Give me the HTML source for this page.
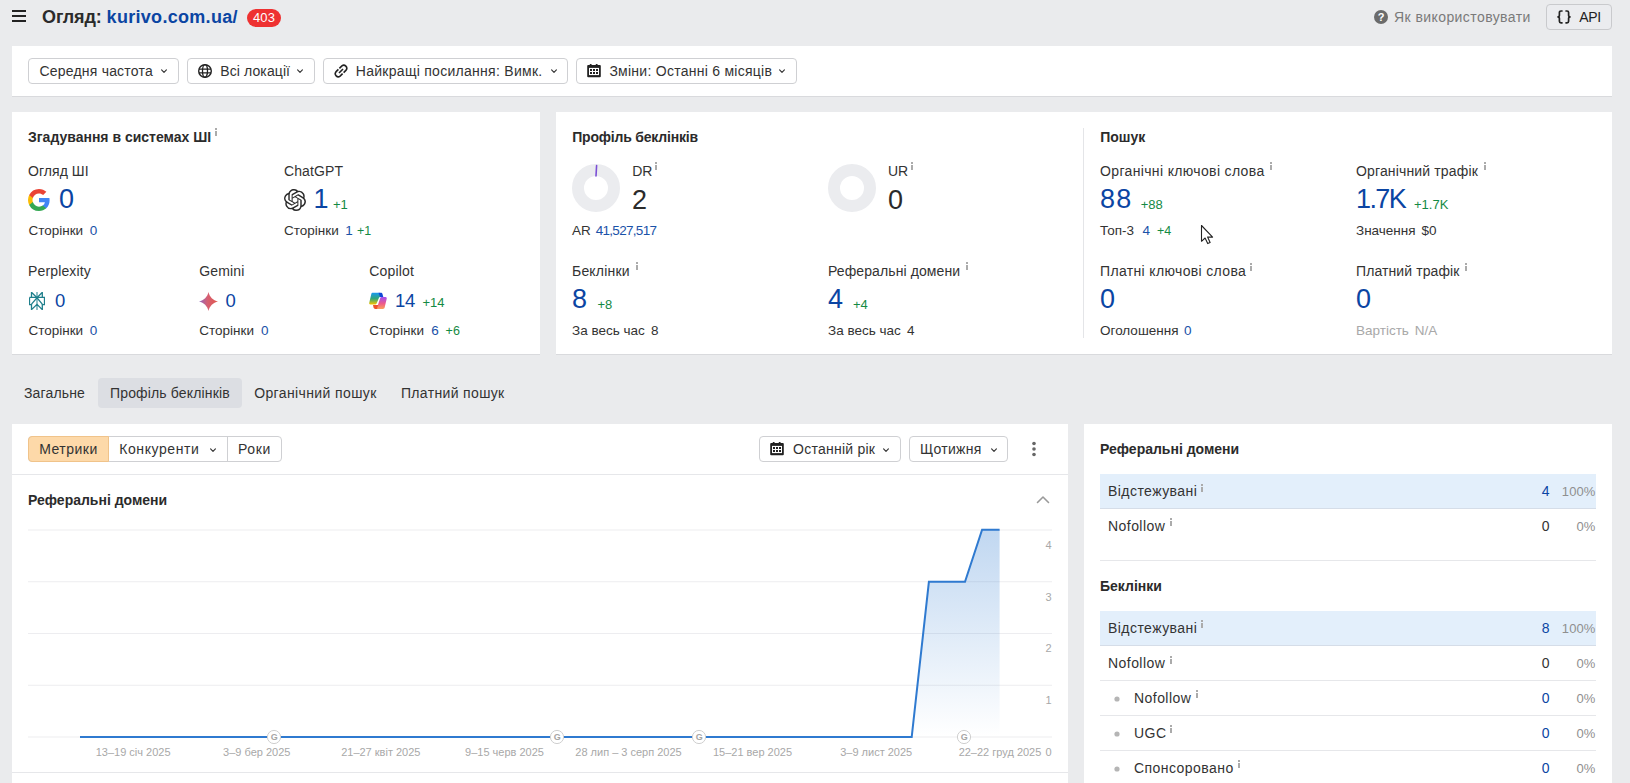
<!DOCTYPE html>
<html><head><meta charset="utf-8"><style>
html,body{margin:0;padding:0}
body{width:1630px;height:783px;overflow:hidden;position:relative;background:#eaebed;font-family:"Liberation Sans",sans-serif}
.t{position:absolute;white-space:nowrap;font-family:"Liberation Sans",sans-serif}
.r{position:absolute;display:block}
</style></head><body>
<div class="r" style="left:12px;top:10px;width:14px;height:2px;background:#222;"></div>
<div class="r" style="left:12px;top:15px;width:14px;height:2px;background:#222;"></div>
<div class="r" style="left:12px;top:20px;width:14px;height:2px;background:#222;"></div>
<span class="t" style="left:42px;top:7.76px;font-size:18px;line-height:18px;color:#2b2b2b;font-weight:700;letter-spacing:-0.12px;">Огляд: <span style="color:#0b45a3;letter-spacing:0.3px">kurivo.com.ua/</span></span>
<div class="r" style="left:247px;top:9px;width:34px;height:18px;background:#ee3131;border-radius:9px"></div>
<span class="t" style="left:253px;top:11.29px;font-size:13px;line-height:13px;color:#fff;letter-spacing:0.1px;">403</span>
<svg class="r" style="left:1374px;top:10px;" width="14" height="14" viewBox="0 0 14 14"><circle cx="7" cy="7" r="7" fill="#6b6b6b"/><text x="7" y="11.3" text-anchor="middle" font-family="Liberation Sans" font-weight="700" font-size="11" fill="#fff">?</text></svg>
<span class="t" style="left:1394px;top:10.35px;font-size:14px;line-height:14px;color:#7a7a7a;letter-spacing:0.42px;">Як використовувати</span>
<div class="r" style="left:1546px;top:4px;width:66px;height:26px;background:#ebecef;border:1px solid #c9cacd;border-radius:4px;box-sizing:border-box"></div>
<svg class="r" style="left:1557px;top:10px;" width="14" height="14" viewBox="0 0 14 14"><g fill="none" stroke="#222" stroke-width="1.7"><path d="M5.6 1H4C3 1 2.4 1.6 2.4 2.6V5.2C2.4 6.2 1.6 6.9 0.4 6.9C1.6 6.9 2.4 7.6 2.4 8.6V11.2C2.4 12.2 3 12.8 4 12.8H5.6"/><path d="M8.4 1H10C11 1 11.6 1.6 11.6 2.6V5.2C11.6 6.2 12.4 6.9 13.6 6.9C12.4 6.9 11.6 7.6 11.6 8.6V11.2C11.6 12.2 11 12.8 10 12.8H8.4"/></g></svg>
<span class="t" style="left:1579.3px;top:10.15px;font-size:14px;line-height:14px;color:#222;letter-spacing:-0.3px;">API</span>
<div class="r" style="left:12px;top:46px;width:1600px;height:50px;background:#fff;box-shadow:0 1px 0 #d9dadd"></div>
<div class="r" style="left:28px;top:58px;width:151px;height:26px;background:#fff;border:1px solid #cfd0d3;border-radius:4px;box-sizing:border-box"></div>
<span class="t" style="left:39.5px;top:63.85px;font-size:14px;line-height:14px;color:#333;letter-spacing:0.2px;">Середня частота</span>
<svg class="r" style="left:160px;top:68px;" width="8" height="6" viewBox="0 0 8 6"><path d="M1.6 1.9 L4 4.3 L6.4 1.9" fill="none" stroke="#333" stroke-width="1.15" stroke-linecap="round" stroke-linejoin="round"/></svg>
<div class="r" style="left:187px;top:58px;width:128px;height:26px;background:#fff;border:1px solid #cfd0d3;border-radius:4px;box-sizing:border-box"></div>
<svg class="r" style="left:198px;top:64px;" width="14" height="14" viewBox="0 0 14 14"><circle cx="7" cy="7" r="6.3" fill="none" stroke="#222" stroke-width="1.4"/><ellipse cx="7" cy="7" rx="2.5" ry="6.3" fill="none" stroke="#222" stroke-width="1.3"/><path d="M0.9 5.1H13.1M0.9 8.9H13.1" stroke="#222" stroke-width="1.3"/></svg>
<span class="t" style="left:220.3px;top:63.85px;font-size:14px;line-height:14px;color:#333;letter-spacing:0.1px;">Всі локації</span>
<svg class="r" style="left:296px;top:68px;" width="8" height="6" viewBox="0 0 8 6"><path d="M1.6 1.9 L4 4.3 L6.4 1.9" fill="none" stroke="#333" stroke-width="1.15" stroke-linecap="round" stroke-linejoin="round"/></svg>
<div class="r" style="left:323px;top:58px;width:245px;height:26px;background:#fff;border:1px solid #cfd0d3;border-radius:4px;box-sizing:border-box"></div>
<svg class="r" style="left:334px;top:64px;" width="14" height="14" viewBox="0 0 14 14"><g fill="none" stroke="#222" stroke-width="1.6" stroke-linecap="butt"><path d="M5.4 4.4 L7.9 1.9 A3 3 0 0 1 12.1 6.1 L9.6 8.6"/><path d="M8.6 9.6 L6.1 12.1 A3 3 0 0 1 1.9 7.9 L4.4 5.4"/><path d="M5 9 L9 5"/></g></svg>
<span class="t" style="left:355.8px;top:63.85px;font-size:14px;line-height:14px;color:#333;letter-spacing:0.28px;">Найкращі посилання: Вимк.</span>
<svg class="r" style="left:549.5px;top:68px;" width="8" height="6" viewBox="0 0 8 6"><path d="M1.6 1.9 L4 4.3 L6.4 1.9" fill="none" stroke="#333" stroke-width="1.15" stroke-linecap="round" stroke-linejoin="round"/></svg>
<div class="r" style="left:576px;top:58px;width:221px;height:26px;background:#fff;border:1px solid #cfd0d3;border-radius:4px;box-sizing:border-box"></div>
<svg class="r" style="left:587px;top:64px;" width="14" height="14" viewBox="0 0 14 14"><rect x="0.2" y="1" width="13.6" height="12.2" rx="1" fill="#222"/><rect x="2.8" y="0" width="1.8" height="2" rx=".6" fill="#222"/><rect x="8.8" y="0" width="1.8" height="2" rx=".6" fill="#222"/><rect x="2" y="3.9" width="10" height="7.2" fill="#fff"/><g fill="#222"><rect x="3" y="5" width="2" height="2"/><rect x="6" y="5" width="2" height="2"/><rect x="9" y="5" width="2" height="2"/><rect x="3" y="8" width="2" height="2"/><rect x="6" y="8" width="2" height="2"/><rect x="9" y="8" width="2" height="2"/></g></svg>
<span class="t" style="left:609.4px;top:63.85px;font-size:14px;line-height:14px;color:#333;letter-spacing:0.26px;">Зміни: Останні 6 місяців</span>
<svg class="r" style="left:778px;top:68px;" width="8" height="6" viewBox="0 0 8 6"><path d="M1.6 1.9 L4 4.3 L6.4 1.9" fill="none" stroke="#333" stroke-width="1.15" stroke-linecap="round" stroke-linejoin="round"/></svg>
<div class="r" style="left:12px;top:112px;width:528px;height:242px;background:#fff;box-shadow:0 1px 0 #d9dadd"></div>
<div class="r" style="left:556px;top:112px;width:1056px;height:242px;background:#fff;box-shadow:0 1px 0 #d9dadd"></div>
<span class="t" style="left:28px;top:130.35px;font-size:14px;line-height:14px;color:#2b2b2b;font-weight:700;">Згадування в системах ШІ</span>
<span class="t" style="left:28px;top:164.35px;font-size:14px;line-height:14px;color:#333;letter-spacing:0.05px;">Огляд ШІ</span>
<svg class="r" style="left:28px;top:189px;" width="22" height="22" viewBox="0 0 22 22"><path d="M21.6 11.25c0-.78-.07-1.53-.2-2.25H11v4.26h5.92a5.06 5.06 0 0 1-2.2 3.32v2.77h3.56c2.08-1.92 3.32-4.74 3.32-8.1z" fill="#4285F4"/><path d="M11 22c2.97 0 5.46-.98 7.28-2.66l-3.56-2.77c-.98.66-2.23 1.06-3.72 1.06-2.86 0-5.29-1.93-6.16-4.53H1.17v2.84A11 11 0 0 0 11 22z" fill="#34A853"/><path d="M4.84 13.1A6.6 6.6 0 0 1 4.5 11c0-.73.13-1.44.34-2.1V6.06H1.17A11 11 0 0 0 0 11c0 1.78.43 3.45 1.17 4.94l3.67-2.84z" fill="#FBBC05"/><path d="M11 4.38c1.62 0 3.06.56 4.21 1.64l3.15-3.15C16.45 1.09 13.97 0 11 0A11 11 0 0 0 1.17 6.06l3.67 2.84C5.71 6.31 8.14 4.38 11 4.38z" fill="#EA4335"/></svg>
<span class="t" style="left:59px;top:185.84px;font-size:27px;line-height:27px;color:#0b45a3;">0</span>
<span class="t" style="left:28.4px;top:223.77px;font-size:13.5px;line-height:13.5px;color:#333;">Сторінки</span>
<span class="t" style="left:89.8px;top:223.77px;font-size:13.5px;line-height:13.5px;color:#1a52a8;">0</span>
<span class="t" style="left:284px;top:164.35px;font-size:14px;line-height:14px;color:#333;letter-spacing:0.1px;">ChatGPT</span>
<svg class="r" style="left:284px;top:189px;" width="22" height="22" viewBox="0 0 24 24"><path fill="#2a2a2a" d="M22.2819 9.8211a5.9847 5.9847 0 0 0-.5157-4.9108 6.0462 6.0462 0 0 0-6.5098-2.9A6.0651 6.0651 0 0 0 4.9807 4.1818a5.9847 5.9847 0 0 0-3.9977 2.9 6.0462 6.0462 0 0 0 .7427 7.0966 5.98 5.98 0 0 0 .511 4.9107 6.051 6.051 0 0 0 6.5146 2.9001A5.9847 5.9847 0 0 0 13.2599 24a6.0557 6.0557 0 0 0 5.7718-4.2058 5.9894 5.9894 0 0 0 3.9977-2.9001 6.0557 6.0557 0 0 0-.7475-7.0729zm-9.022 12.6081a4.4755 4.4755 0 0 1-2.8764-1.0408l.1419-.0804 4.7783-2.7582a.7948.7948 0 0 0 .3927-.6813v-6.7369l2.02 1.1686a.071.071 0 0 1 .038.052v5.5826a4.504 4.504 0 0 1-4.4945 4.4944zm-9.6607-4.1254a4.4708 4.4708 0 0 1-.5346-3.0137l.142.0852 4.783 2.7582a.7712.7712 0 0 0 .7806 0l5.8428-3.3685v2.3324a.0804.0804 0 0 1-.0332.0615L9.74 19.9502a4.4992 4.4992 0 0 1-6.1408-1.6464zM2.3408 7.8956a4.485 4.485 0 0 1 2.3655-1.9728V11.6a.7664.7664 0 0 0 .3879.6765l5.8144 3.3543-2.0201 1.1685a.0757.0757 0 0 1-.071 0l-4.8303-2.7865A4.504 4.504 0 0 1 2.3408 7.872zm16.5963 3.8558L13.1038 8.364 15.1192 7.2a.0757.0757 0 0 1 .071 0l4.8303 2.7913a4.4944 4.4944 0 0 1-.6765 8.1042v-5.6772a.79.79 0 0 0-.407-.667zm2.0107-3.0231l-.142-.0852-4.7735-2.7818a.7759.7759 0 0 0-.7854 0L9.409 9.2297V6.8974a.0662.0662 0 0 1 .0284-.0615l4.8303-2.7866a4.4992 4.4992 0 0 1 6.6802 4.66zM8.3065 12.863l-2.02-1.1638a.0804.0804 0 0 1-.038-.0567V6.0742a4.4992 4.4992 0 0 1 7.3757-3.4537l-.142.0805L8.704 5.459a.7948.7948 0 0 0-.3927.6813zm1.0976-2.3654l2.602-1.4998 2.6069 1.4998v2.9994l-2.5974 1.4997-2.6067-1.4997Z"/></svg>
<span class="t" style="left:313.5px;top:185.84px;font-size:27px;line-height:27px;color:#0b45a3;">1</span>
<span class="t" style="left:333px;top:197.89px;font-size:13px;line-height:13px;color:#148a44;">+1</span>
<span class="t" style="left:284px;top:223.77px;font-size:13.5px;line-height:13.5px;color:#333;">Сторінки</span>
<span class="t" style="left:345.3px;top:223.77px;font-size:13.5px;line-height:13.5px;color:#1a52a8;">1</span>
<span class="t" style="left:357px;top:224.62px;font-size:12.5px;line-height:12.5px;color:#148a44;">+1</span>
<span class="t" style="left:28px;top:264.45px;font-size:14px;line-height:14px;color:#333;letter-spacing:0.15px;">Perplexity</span>
<svg class="r" style="left:29px;top:292px;" width="16" height="18" viewBox="0 0 16 18"><g fill="none" stroke="#1f7f8c" stroke-width="1.3" stroke-linejoin="miter"><path d="M8 0V18" stroke-opacity=".75"/><path d="M2.5 5.4V0.3L8 5.8L13.3 0.3V5.4"/><path d="M0.5 5.4H15.5V12.6H13.3"/><path d="M2.5 12.6H0.5V5.4"/><path d="M2.5 12.1L8 5.8L13.3 12.1"/><path d="M2.5 12V17.6L8 12.4L13.3 17.6V12"/></g></svg>
<span class="t" style="left:55px;top:291.64px;font-size:18.5px;line-height:18.5px;color:#0b45a3;">0</span>
<span class="t" style="left:28.4px;top:323.67px;font-size:13.5px;line-height:13.5px;color:#333;">Сторінки</span>
<span class="t" style="left:89.8px;top:323.67px;font-size:13.5px;line-height:13.5px;color:#1a52a8;">0</span>
<span class="t" style="left:199.3px;top:264.45px;font-size:14px;line-height:14px;color:#333;letter-spacing:0.15px;">Gemini</span>
<svg class="r" style="left:198.5px;top:291.5px;" width="19" height="19" viewBox="0 0 18 18"><defs><linearGradient id="gg" x1="0" y1="0" x2="1" y2="0"><stop offset="0" stop-color="#9168c0"/><stop offset=".45" stop-color="#d65f72"/><stop offset="1" stop-color="#e0584c"/></linearGradient></defs><path d="M9 0 C10 4.6 13.4 8 18 9 C13.4 10 10 13.4 9 18 C8 13.4 4.6 10 0 9 C4.6 8 8 4.6 9 0Z" fill="url(#gg)"/></svg>
<span class="t" style="left:225.4px;top:291.64px;font-size:18.5px;line-height:18.5px;color:#0b45a3;">0</span>
<span class="t" style="left:199.3px;top:323.67px;font-size:13.5px;line-height:13.5px;color:#333;">Сторінки</span>
<span class="t" style="left:261px;top:323.67px;font-size:13.5px;line-height:13.5px;color:#1a52a8;">0</span>
<span class="t" style="left:369.3px;top:264.45px;font-size:14px;line-height:14px;color:#333;letter-spacing:0.15px;">Copilot</span>
<svg class="r" style="left:369px;top:292px;" width="18" height="17" viewBox="0 0 18 17"><defs><linearGradient id="cp1" x1="0" y1="0" x2="0" y2="1"><stop offset="0" stop-color="#1798f2"/><stop offset=".5" stop-color="#2fa77a"/><stop offset="1" stop-color="#f6c500"/></linearGradient><linearGradient id="cp2" x1="0" y1="0" x2="0" y2="1"><stop offset="0" stop-color="#a04ef2"/><stop offset=".55" stop-color="#ee5a8a"/><stop offset="1" stop-color="#fca05a"/></linearGradient></defs><path d="M12.4 5H16.4C17.4 5 18 5.8 17.7 6.8L15.6 15.7C15.4 16.4 14.8 16.9 14 16.9H7.6L11.3 5.8C11.5 5.3 11.9 5 12.4 5Z" fill="url(#cp2)"/><path d="M4 12.9H9.3L8 16.9H6.2C5.4 16.9 4.9 16.5 4.6 15.8Z" fill="#ef532c"/><path d="M3.3 0.7H10.6L11.9 4.9H11C10.6 4.9 10.2 5.2 10 5.7L7.6 11.6C7.4 12.1 7 12.4 6.5 12.4H1.3C0.5 12.4 0 11.8 0.2 11L2.3 1.9C2.5 1.2 2.9 0.7 3.3 0.7Z" fill="url(#cp1)"/><path d="M9.6 0.7H11.9C12.7 0.7 13.2 1.2 13.5 2L14.3 4.9H11Z" fill="#1148d6"/></svg>
<span class="t" style="left:395px;top:291.64px;font-size:18.5px;line-height:18.5px;color:#0b45a3;letter-spacing:-0.4px;">14</span>
<span class="t" style="left:422.5px;top:295.99px;font-size:13px;line-height:13px;color:#148a44;">+14</span>
<span class="t" style="left:369.3px;top:323.67px;font-size:13.5px;line-height:13.5px;color:#333;">Сторінки</span>
<span class="t" style="left:431.2px;top:323.67px;font-size:13.5px;line-height:13.5px;color:#1a52a8;">6</span>
<span class="t" style="left:445.6px;top:324.52px;font-size:12.5px;line-height:12.5px;color:#148a44;">+6</span>
<span class="t" style="left:572.2px;top:130.25px;font-size:14px;line-height:14px;color:#2b2b2b;font-weight:700;letter-spacing:-0.2px;">Профіль беклінків</span>
<svg class="r" style="left:572px;top:164px;" width="48" height="48" viewBox="0 0 48 48"><circle cx="24" cy="24" r="18" fill="none" stroke="#ebecef" stroke-width="12"/><path d="M24.6 1.5 L24 12" stroke="#7b4fd6" stroke-width="1.6" stroke-linecap="round"/></svg>
<span class="t" style="left:632.2px;top:164.45px;font-size:14px;line-height:14px;color:#333;">DR</span>
<span class="t" style="left:632px;top:186.54px;font-size:27px;line-height:27px;color:#2b2b2b;">2</span>
<span class="t" style="left:572px;top:223.77px;font-size:13.5px;line-height:13.5px;color:#333;">AR</span>
<span class="t" style="left:595.7px;top:223.77px;font-size:13.5px;line-height:13.5px;color:#1a52a8;letter-spacing:-0.7px;">41,527,517</span>
<svg class="r" style="left:828px;top:164px;" width="48" height="48" viewBox="0 0 48 48"><circle cx="24" cy="24" r="18" fill="none" stroke="#ebecef" stroke-width="12"/></svg>
<span class="t" style="left:888px;top:164.45px;font-size:14px;line-height:14px;color:#333;">UR</span>
<span class="t" style="left:888px;top:186.54px;font-size:27px;line-height:27px;color:#2b2b2b;">0</span>
<span class="t" style="left:572px;top:264.45px;font-size:14px;line-height:14px;color:#333;letter-spacing:0.2px;">Беклінки</span>
<span class="t" style="left:572px;top:285.94px;font-size:27px;line-height:27px;color:#0b45a3;">8</span>
<span class="t" style="left:597.4px;top:298.19px;font-size:13px;line-height:13px;color:#148a44;">+8</span>
<span class="t" style="left:572px;top:323.87px;font-size:13.5px;line-height:13.5px;color:#333;">За весь час</span>
<span class="t" style="left:651px;top:323.87px;font-size:13.5px;line-height:13.5px;color:#333;">8</span>
<span class="t" style="left:828px;top:264.45px;font-size:14px;line-height:14px;color:#333;letter-spacing:0.1px;">Реферальні домени</span>
<span class="t" style="left:828px;top:285.94px;font-size:27px;line-height:27px;color:#0b45a3;">4</span>
<span class="t" style="left:853px;top:298.19px;font-size:13px;line-height:13px;color:#148a44;">+4</span>
<span class="t" style="left:828px;top:323.87px;font-size:13.5px;line-height:13.5px;color:#333;">За весь час</span>
<span class="t" style="left:907px;top:323.87px;font-size:13.5px;line-height:13.5px;color:#333;">4</span>
<div class="r" style="left:1083px;top:128px;width:1px;height:210px;background:#e4e5e8;"></div>
<span class="t" style="left:1100.2px;top:130.15px;font-size:14px;line-height:14px;color:#2b2b2b;font-weight:700;">Пошук</span>
<span class="t" style="left:1100px;top:164.05px;font-size:14px;line-height:14px;color:#333;letter-spacing:0.35px;">Органічні ключові слова</span>
<span class="t" style="left:1100px;top:186.04px;font-size:27px;line-height:27px;color:#0b45a3;letter-spacing:1.2px;">88</span>
<span class="t" style="left:1140.7px;top:197.59px;font-size:13px;line-height:13px;color:#148a44;">+88</span>
<span class="t" style="left:1100px;top:224.07px;font-size:13.5px;line-height:13.5px;color:#333;">Топ-3</span>
<span class="t" style="left:1142.4px;top:224.07px;font-size:13.5px;line-height:13.5px;color:#1a52a8;">4</span>
<span class="t" style="left:1157px;top:224.92px;font-size:12.5px;line-height:12.5px;color:#148a44;">+4</span>
<span class="t" style="left:1356px;top:164.05px;font-size:14px;line-height:14px;color:#333;letter-spacing:0.15px;">Органічний трафік</span>
<span class="t" style="left:1356px;top:186.04px;font-size:27px;line-height:27px;color:#0b45a3;letter-spacing:-1.6px;">1.7K</span>
<span class="t" style="left:1414px;top:197.59px;font-size:13px;line-height:13px;color:#148a44;">+1.7K</span>
<span class="t" style="left:1356px;top:224.07px;font-size:13.5px;line-height:13.5px;color:#333;">Значення</span>
<span class="t" style="left:1421.5px;top:224.07px;font-size:13.5px;line-height:13.5px;color:#333;">$0</span>
<span class="t" style="left:1100px;top:264.15px;font-size:14px;line-height:14px;color:#333;letter-spacing:0.35px;">Платні ключові слова</span>
<span class="t" style="left:1100px;top:285.64px;font-size:27px;line-height:27px;color:#0b45a3;">0</span>
<span class="t" style="left:1100px;top:323.97px;font-size:13.5px;line-height:13.5px;color:#333;">Оголошення</span>
<span class="t" style="left:1184px;top:323.97px;font-size:13.5px;line-height:13.5px;color:#1a52a8;">0</span>
<span class="t" style="left:1356px;top:264.15px;font-size:14px;line-height:14px;color:#333;letter-spacing:0.1px;">Платний трафік</span>
<span class="t" style="left:1356px;top:285.64px;font-size:27px;line-height:27px;color:#0b45a3;">0</span>
<span class="t" style="left:1356px;top:323.97px;font-size:13.5px;line-height:13.5px;color:#a8a8a8;">Вартість</span>
<span class="t" style="left:1414.7px;top:323.97px;font-size:13.5px;line-height:13.5px;color:#a8a8a8;">N/A</span>
<div class="r" style="left:215px;top:128px;width:2px;height:2px;background:#ababab;"></div>
<div class="r" style="left:215px;top:131px;width:2px;height:5px;background:#ababab;"></div>
<div class="r" style="left:655px;top:162px;width:2px;height:2px;background:#ababab;"></div>
<div class="r" style="left:655px;top:165px;width:2px;height:5px;background:#ababab;"></div>
<div class="r" style="left:911px;top:162px;width:2px;height:2px;background:#ababab;"></div>
<div class="r" style="left:911px;top:165px;width:2px;height:5px;background:#ababab;"></div>
<div class="r" style="left:635.5px;top:262.4px;width:2px;height:2px;background:#ababab;"></div>
<div class="r" style="left:635.5px;top:265.4px;width:2px;height:5px;background:#ababab;"></div>
<div class="r" style="left:966px;top:262px;width:2px;height:2px;background:#ababab;"></div>
<div class="r" style="left:966px;top:265px;width:2px;height:5px;background:#ababab;"></div>
<div class="r" style="left:1269.6px;top:162.3px;width:2px;height:2px;background:#ababab;"></div>
<div class="r" style="left:1269.6px;top:165.3px;width:2px;height:5px;background:#ababab;"></div>
<div class="r" style="left:1484px;top:162.3px;width:2px;height:2px;background:#ababab;"></div>
<div class="r" style="left:1484px;top:165.3px;width:2px;height:5px;background:#ababab;"></div>
<div class="r" style="left:1250.4px;top:262.5px;width:2px;height:2px;background:#ababab;"></div>
<div class="r" style="left:1250.4px;top:265.5px;width:2px;height:5px;background:#ababab;"></div>
<div class="r" style="left:1464.7px;top:262.5px;width:2px;height:2px;background:#ababab;"></div>
<div class="r" style="left:1464.7px;top:265.5px;width:2px;height:5px;background:#ababab;"></div>
<div class="r" style="left:98px;top:378px;width:144px;height:30px;background:#dcdee3;border-radius:4px"></div>
<span class="t" style="left:24px;top:385.75px;font-size:14px;line-height:14px;color:#333;letter-spacing:0.15px;">Загальне</span>
<span class="t" style="left:110px;top:385.75px;font-size:14px;line-height:14px;color:#333;letter-spacing:0.15px;">Профіль беклінків</span>
<span class="t" style="left:254.2px;top:385.75px;font-size:14px;line-height:14px;color:#333;letter-spacing:0.38px;">Органічний пошук</span>
<span class="t" style="left:400.9px;top:385.75px;font-size:14px;line-height:14px;color:#333;letter-spacing:0.35px;">Платний пошук</span>
<div class="r" style="left:12px;top:424px;width:1056px;height:400px;background:#fff;"></div>
<div class="r" style="left:28px;top:436px;width:254px;height:26px;background:#fff;border:1px solid #cfd0d3;border-radius:4px;box-sizing:border-box"></div>
<div class="r" style="left:28px;top:436px;width:80.5px;height:26px;background:#fdd9a9;border:1px solid #f0c38a;border-radius:4px 0 0 4px;box-sizing:border-box"></div>
<div class="r" style="left:227px;top:437px;width:1px;height:24px;background:#cfd0d3;"></div>
<span class="t" style="left:39.2px;top:441.75px;font-size:14px;line-height:14px;color:#333;letter-spacing:0.5px;">Метрики</span>
<span class="t" style="left:119.2px;top:441.75px;font-size:14px;line-height:14px;color:#333;letter-spacing:0.6px;">Конкуренти</span>
<svg class="r" style="left:209px;top:447px;" width="8" height="6" viewBox="0 0 8 6"><path d="M1.6 1.9 L4 4.3 L6.4 1.9" fill="none" stroke="#333" stroke-width="1.15" stroke-linecap="round" stroke-linejoin="round"/></svg>
<span class="t" style="left:238px;top:441.75px;font-size:14px;line-height:14px;color:#333;letter-spacing:0.6px;">Роки</span>
<div class="r" style="left:759px;top:436px;width:142px;height:26px;background:#fff;border:1px solid #cfd0d3;border-radius:4px;box-sizing:border-box"></div>
<svg class="r" style="left:770px;top:442px;" width="14" height="14" viewBox="0 0 14 14"><rect x="0.2" y="1" width="13.6" height="12.2" rx="1" fill="#222"/><rect x="2.8" y="0" width="1.8" height="2" rx=".6" fill="#222"/><rect x="8.8" y="0" width="1.8" height="2" rx=".6" fill="#222"/><rect x="2" y="3.9" width="10" height="7.2" fill="#fff"/><g fill="#222"><rect x="3" y="5" width="2" height="2"/><rect x="6" y="5" width="2" height="2"/><rect x="9" y="5" width="2" height="2"/><rect x="3" y="8" width="2" height="2"/><rect x="6" y="8" width="2" height="2"/><rect x="9" y="8" width="2" height="2"/></g></svg>
<span class="t" style="left:793px;top:441.75px;font-size:14px;line-height:14px;color:#333;letter-spacing:0.25px;">Останній рік</span>
<svg class="r" style="left:882px;top:447px;" width="8" height="6" viewBox="0 0 8 6"><path d="M1.6 1.9 L4 4.3 L6.4 1.9" fill="none" stroke="#333" stroke-width="1.15" stroke-linecap="round" stroke-linejoin="round"/></svg>
<div class="r" style="left:909px;top:436px;width:99px;height:26px;background:#fff;border:1px solid #cfd0d3;border-radius:4px;box-sizing:border-box"></div>
<span class="t" style="left:920px;top:441.75px;font-size:14px;line-height:14px;color:#333;letter-spacing:0.3px;">Щотижня</span>
<svg class="r" style="left:989.5px;top:447px;" width="8" height="6" viewBox="0 0 8 6"><path d="M1.6 1.9 L4 4.3 L6.4 1.9" fill="none" stroke="#333" stroke-width="1.15" stroke-linecap="round" stroke-linejoin="round"/></svg>
<svg class="r" style="left:1030px;top:440px;" width="8" height="18" viewBox="0 0 8 18"><circle cx="4" cy="3.5" r="1.8" fill="#666"/><circle cx="4" cy="9" r="1.8" fill="#666"/><circle cx="4" cy="14.5" r="1.8" fill="#666"/></svg>
<div class="r" style="left:12px;top:474px;width:1056px;height:1px;background:#e6e7ea;"></div>
<span class="t" style="left:28px;top:493.45px;font-size:14px;line-height:14px;color:#2b2b2b;font-weight:700;">Реферальні домени</span>
<svg class="r" style="left:1036px;top:494px;" width="14" height="10" viewBox="0 0 14 10"><path d="M1.5 8.5 L7 3 L12.5 8.5" fill="none" stroke="#9a9a9a" stroke-width="1.6" stroke-linecap="round" stroke-linejoin="round"/></svg>
<svg class="r" style="left:0;top:0" width="1630" height="783"><rect x="28" y="529.5" width="1024" height="1" fill="#ededf0"/><rect x="28" y="581.25" width="1024" height="1" fill="#ededf0"/><rect x="28" y="633.0" width="1024" height="1" fill="#ededf0"/><rect x="28" y="684.75" width="1024" height="1" fill="#ededf0"/><rect x="28" y="736.5" width="1024" height="1" fill="#ededf0"/><defs><linearGradient id="ar" x1="0" y1="0" x2="0" y2="1"><stop offset="0" stop-color="#2f7bd0" stop-opacity=".30"/><stop offset="1" stop-color="#2f7bd0" stop-opacity="0"/></linearGradient></defs><path d="M911.7 737 L928.9 581.8 L965 581.8 L982.1 529.8 L999.6 529.8 L999.6 737 Z" fill="url(#ar)"/><path d="M80 737 L911.7 737 L928.9 581.8 L965 581.8 L982.1 529.8 L999.6 529.8" fill="none" stroke="#2f7ad0" stroke-width="2" stroke-linejoin="miter"/><circle cx="274" cy="737" r="6.6" fill="#fff" stroke="#cfcfcf" stroke-width="1"/><text x="274.2" y="740.2" text-anchor="middle" font-family="Liberation Sans" font-weight="700" font-size="9" fill="#a5a5a5">G</text><circle cx="557" cy="737" r="6.6" fill="#fff" stroke="#cfcfcf" stroke-width="1"/><text x="557.2" y="740.2" text-anchor="middle" font-family="Liberation Sans" font-weight="700" font-size="9" fill="#a5a5a5">G</text><circle cx="699" cy="737" r="6.6" fill="#fff" stroke="#cfcfcf" stroke-width="1"/><text x="699.2" y="740.2" text-anchor="middle" font-family="Liberation Sans" font-weight="700" font-size="9" fill="#a5a5a5">G</text><circle cx="964" cy="737" r="6.6" fill="#fff" stroke="#cfcfcf" stroke-width="1"/><text x="964.2" y="740.2" text-anchor="middle" font-family="Liberation Sans" font-weight="700" font-size="9" fill="#a5a5a5">G</text><text x="133.1" y="756" text-anchor="middle" font-family="Liberation Sans" font-size="11" fill="#a8a8a8">13–19 січ 2025</text><text x="256.8" y="756" text-anchor="middle" font-family="Liberation Sans" font-size="11" fill="#a8a8a8">3–9 бер 2025</text><text x="380.8" y="756" text-anchor="middle" font-family="Liberation Sans" font-size="11" fill="#a8a8a8">21–27 квіт 2025</text><text x="504.5" y="756" text-anchor="middle" font-family="Liberation Sans" font-size="11" fill="#a8a8a8">9–15 черв 2025</text><text x="628.5" y="756" text-anchor="middle" font-family="Liberation Sans" font-size="11" fill="#a8a8a8">28 лип – 3 серп 2025</text><text x="752.5" y="756" text-anchor="middle" font-family="Liberation Sans" font-size="11" fill="#a8a8a8">15–21 вер 2025</text><text x="876.2" y="756" text-anchor="middle" font-family="Liberation Sans" font-size="11" fill="#a8a8a8">3–9 лист 2025</text><text x="1000" y="756" text-anchor="middle" font-family="Liberation Sans" font-size="11" fill="#a8a8a8">22–22 груд 2025</text><text x="1051.5" y="549" text-anchor="end" font-family="Liberation Sans" font-size="11" fill="#a8a8a8">4</text><text x="1051.5" y="601" text-anchor="end" font-family="Liberation Sans" font-size="11" fill="#a8a8a8">3</text><text x="1051.5" y="652" text-anchor="end" font-family="Liberation Sans" font-size="11" fill="#a8a8a8">2</text><text x="1051.5" y="704" text-anchor="end" font-family="Liberation Sans" font-size="11" fill="#a8a8a8">1</text><text x="1051.5" y="756" text-anchor="end" font-family="Liberation Sans" font-size="11" fill="#a8a8a8">0</text></svg>
<div class="r" style="left:12px;top:772px;width:1056px;height:1px;background:#e6e7ea;"></div>
<div class="r" style="left:1084px;top:424px;width:528px;height:400px;background:#fff;"></div>
<span class="t" style="left:1100px;top:442.25px;font-size:14px;line-height:14px;color:#2b2b2b;font-weight:700;">Реферальні домени</span>
<div class="r" style="left:1100px;top:474px;width:496px;height:35px;background:#e3effb;"></div>
<div class="r" style="left:1100px;top:508px;width:496px;height:1px;background:#d5dde8;"></div>
<span class="t" style="left:1108px;top:484.35px;font-size:14px;line-height:14px;color:#333;letter-spacing:0.45px;">Відстежувані</span>
<span class="t" style="right:80.5px;top:484.35px;font-size:14px;line-height:14px;color:#0b45a3;">4</span>
<span class="t" style="right:34.5px;top:485.19px;font-size:13px;line-height:13px;color:#8f8f8f;letter-spacing:0.1px;">100%</span>
<span class="t" style="left:1108px;top:519.35px;font-size:14px;line-height:14px;color:#333;letter-spacing:0.45px;">Nofollow</span>
<span class="t" style="right:80.5px;top:519.35px;font-size:14px;line-height:14px;color:#333;">0</span>
<span class="t" style="right:34.5px;top:520.19px;font-size:13px;line-height:13px;color:#8f8f8f;letter-spacing:0.1px;">0%</span>
<div class="r" style="left:1100px;top:560px;width:496px;height:1px;background:#e6e7ea;"></div>
<span class="t" style="left:1100px;top:578.95px;font-size:14px;line-height:14px;color:#2b2b2b;font-weight:700;">Беклінки</span>
<div class="r" style="left:1100px;top:611px;width:496px;height:35px;background:#e3effb;"></div>
<div class="r" style="left:1100px;top:645px;width:496px;height:1px;background:#d5dde8;"></div>
<span class="t" style="left:1108px;top:621.35px;font-size:14px;line-height:14px;color:#333;letter-spacing:0.45px;">Відстежувані</span>
<span class="t" style="right:80.5px;top:621.35px;font-size:14px;line-height:14px;color:#0b45a3;">8</span>
<span class="t" style="right:34.5px;top:622.19px;font-size:13px;line-height:13px;color:#8f8f8f;letter-spacing:0.1px;">100%</span>
<div class="r" style="left:1100px;top:680px;width:496px;height:1px;background:#e6e7ea;"></div>
<span class="t" style="left:1108px;top:656.35px;font-size:14px;line-height:14px;color:#333;letter-spacing:0.45px;">Nofollow</span>
<span class="t" style="right:80.5px;top:656.35px;font-size:14px;line-height:14px;color:#333;">0</span>
<span class="t" style="right:34.5px;top:657.19px;font-size:13px;line-height:13px;color:#8f8f8f;letter-spacing:0.1px;">0%</span>
<div class="r" style="left:1100px;top:715px;width:496px;height:1px;background:#e6e7ea;"></div>
<svg class="r" style="left:1114px;top:695.7px;" width="6" height="6" viewBox="0 0 6 6"><circle cx="3" cy="3" r="2.6" fill="#b5b5b5"/></svg>
<span class="t" style="left:1134px;top:691.35px;font-size:14px;line-height:14px;color:#333;letter-spacing:0.45px;">Nofollow</span>
<span class="t" style="right:80.5px;top:691.35px;font-size:14px;line-height:14px;color:#0b45a3;">0</span>
<span class="t" style="right:34.5px;top:692.19px;font-size:13px;line-height:13px;color:#8f8f8f;letter-spacing:0.1px;">0%</span>
<div class="r" style="left:1100px;top:750px;width:496px;height:1px;background:#e6e7ea;"></div>
<svg class="r" style="left:1114px;top:730.7px;" width="6" height="6" viewBox="0 0 6 6"><circle cx="3" cy="3" r="2.6" fill="#b5b5b5"/></svg>
<span class="t" style="left:1134px;top:726.35px;font-size:14px;line-height:14px;color:#333;letter-spacing:0.45px;">UGC</span>
<span class="t" style="right:80.5px;top:726.35px;font-size:14px;line-height:14px;color:#0b45a3;">0</span>
<span class="t" style="right:34.5px;top:727.19px;font-size:13px;line-height:13px;color:#8f8f8f;letter-spacing:0.1px;">0%</span>
<div class="r" style="left:1100px;top:785px;width:496px;height:1px;background:#e6e7ea;"></div>
<svg class="r" style="left:1114px;top:765.7px;" width="6" height="6" viewBox="0 0 6 6"><circle cx="3" cy="3" r="2.6" fill="#b5b5b5"/></svg>
<span class="t" style="left:1134px;top:761.35px;font-size:14px;line-height:14px;color:#333;letter-spacing:0.45px;">Спонсоровано</span>
<span class="t" style="right:80.5px;top:761.35px;font-size:14px;line-height:14px;color:#0b45a3;">0</span>
<span class="t" style="right:34.5px;top:762.19px;font-size:13px;line-height:13px;color:#8f8f8f;letter-spacing:0.1px;">0%</span>
<div class="r" style="left:1200.8px;top:484.1px;width:2px;height:2px;background:#ababab;"></div>
<div class="r" style="left:1200.8px;top:487.1px;width:2px;height:5px;background:#ababab;"></div>
<div class="r" style="left:1170px;top:517.8px;width:2px;height:2px;background:#ababab;"></div>
<div class="r" style="left:1170px;top:520.8px;width:2px;height:5px;background:#ababab;"></div>
<div class="r" style="left:1200.8px;top:620.4px;width:2px;height:2px;background:#ababab;"></div>
<div class="r" style="left:1200.8px;top:623.4px;width:2px;height:5px;background:#ababab;"></div>
<div class="r" style="left:1170px;top:655.8px;width:2px;height:2px;background:#ababab;"></div>
<div class="r" style="left:1170px;top:658.8px;width:2px;height:5px;background:#ababab;"></div>
<div class="r" style="left:1195.7px;top:690.2px;width:2px;height:2px;background:#ababab;"></div>
<div class="r" style="left:1195.7px;top:693.2px;width:2px;height:5px;background:#ababab;"></div>
<div class="r" style="left:1170px;top:725px;width:2px;height:2px;background:#ababab;"></div>
<div class="r" style="left:1170px;top:728px;width:2px;height:5px;background:#ababab;"></div>
<div class="r" style="left:1238px;top:760.4px;width:2px;height:2px;background:#ababab;"></div>
<div class="r" style="left:1238px;top:763.4px;width:2px;height:5px;background:#ababab;"></div>
<svg class="r" style="left:1200px;top:224px;" width="14" height="21" viewBox="0 0 14 21"><path d="M1.5 1.5 L1.5 17.3 L5.1 14 L7.7 19.6 L10.1 18.6 L7.6 13.1 L12.6 13.1 Z" fill="#fff" stroke="#222" stroke-width="1.1" stroke-linejoin="round"/></svg>
</body></html>
